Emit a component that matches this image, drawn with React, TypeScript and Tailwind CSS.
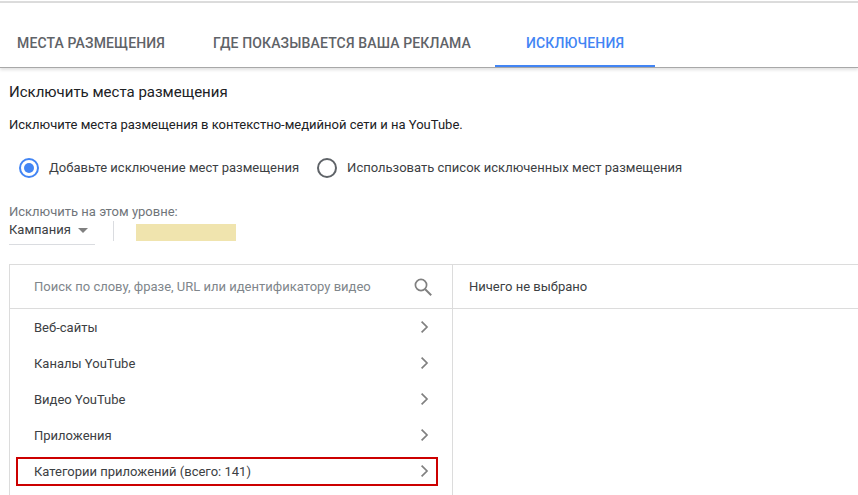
function Chevron() {
  return (
    <svg width="24" height="24" viewBox="0 0 24 24" className="mb-[2px] shrink-0" fill="none" stroke="#808080" strokeWidth="1.7">
      <path d="M9.6 6.6 15 12l-5.4 5.4" />
    </svg>
  );
}
function Row({ label }: { label: string }) {
  return (
    <div className="flex h-9 items-center justify-between pl-6 pr-4 text-[13px] text-[#3c4043]">
      <span>{label}</span>
      <Chevron />
    </div>
  );
}
export default function App() {
  return (
    <div className="relative h-[495px] w-[858px] overflow-hidden bg-white font-['Roboto',sans-serif]">
      <div className="h-[3px] border-b-2 border-[#dcdcdc]" />
      <div className="flex h-[65px] items-stretch border-b border-[#a8a8a8] pl-[17px] text-[14px] font-medium tracking-[0.14px] text-[#5f6368] shadow-[0_2px_3px_rgba(0,0,0,0.12)]">
        <div className="flex items-center pt-[17px]">МЕСТА РАЗМЕЩЕНИЯ</div>
        <div className="ml-12 flex items-center pt-[17px]">ГДЕ ПОКАЗЫВАЕТСЯ ВАША РЕКЛАМА</div>
        <div className="ml-6 flex w-40 items-center justify-center border-b-2 border-[#4285f4] pt-[19px] text-[#4285f4]">ИСКЛЮЧЕНИЯ</div>
      </div>
      <div className="pl-[9px]">
        <div className="mt-[15px] h-[18px] text-[15px] leading-[18px] text-[#202124]">Исключить места размещения</div>
        <div className="mt-[16px] h-[16px] text-[13px] leading-[16px] text-[#202124]">Исключите места размещения в контекстно-медийной сети и на YouTube.</div>
        <div className="ml-[10px] mt-[25px] flex h-5 items-center text-[13px] text-[#3c4043]">
          <span className="flex h-5 w-5 items-center justify-center rounded-full border-2 border-[#4285f4]">
            <span className="h-[10px] w-[10px] rounded-full bg-[#4285f4]" />
          </span>
          <span className="ml-[10px]">Добавьте исключение мест размещения</span>
          <span className="ml-[18px] h-5 w-5 rounded-full border-2 border-[#5f6368]" />
          <span className="ml-[10px]">Использовать список исключенных мест размещения</span>
        </div>
        <div className="mt-[27px] h-[14px] text-[13px] leading-[14px] text-[#70757a]">Исключить на этом уровне:</div>
        <div className="mt-[2px] flex h-[24px] items-start">
          <div className="flex h-[24px] w-[86px] border-b border-[#dadce0] pt-[1px] text-[13px] leading-[16px] text-[#3c4043]">
            Кампания
            <span className="ml-[7px] mt-[6px] h-0 w-0 border-x-[5.5px] border-t-[5px] border-x-transparent border-t-[#808080]" />
          </div>
          <div className="ml-[18px] h-5 w-px bg-[#dadce0]" />
          <div className="ml-[22px] mt-[3px] h-[17px] w-[100px] bg-[#f0e4ae]" />
        </div>
        <div className="mt-[19px] flex h-[300px] border-l border-t border-[#dcdcdc]">
          <div className="w-[443px] shrink-0 border-r border-[#dcdcdc]">
            <div className="flex h-[44px] items-center justify-between border-b border-[#dcdcdc] pl-6 pr-[17px] text-[13px] text-[#80868b]">
              <span>Поиск по слову, фразе, URL или идентификатору видео</span>
              <svg width="24" height="24" viewBox="0 0 24 24" fill="none" stroke="#808080" strokeWidth="1.7">
                <circle cx="10" cy="10" r="5.6" />
                <path d="m14.2 14.2 6 6" strokeWidth="2" />
              </svg>
            </div>
            <div className="pt-px">
              <Row label="Веб-сайты" />
              <Row label="Каналы YouTube" />
              <Row label="Видео YouTube" />
              <Row label="Приложения" />
              <Row label="Категории приложений (всего: 141)" />
            </div>
          </div>
          <div className="flex-1">
            <div className="flex h-[44px] items-center border-b border-[#dcdcdc] pl-4 text-[13px] text-[#3c4043]">Ничего не выбрано</div>
          </div>
        </div>
      </div>
      <div className="absolute left-4 top-[457px] h-[29px] w-[422px] border-2 border-[#cc0000]" />
    </div>
  );
}
